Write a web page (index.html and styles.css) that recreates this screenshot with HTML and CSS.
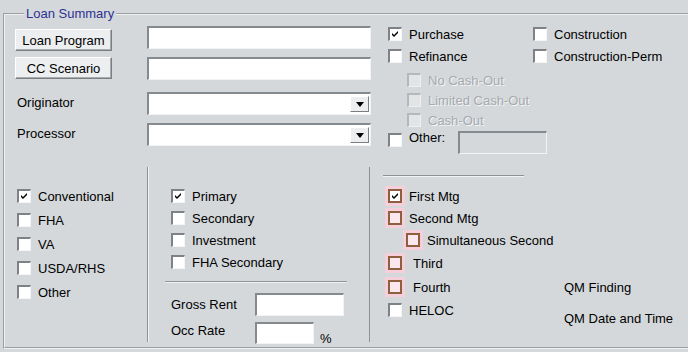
FILE: index.html
```html
<!DOCTYPE html>
<html lang="en">
<head>
  <meta charset="UTF-8">
  <title>Loan Summary</title>
  <link rel="stylesheet" href="styles.css">
</head>
<body>

<fieldset class="summary">
  <legend>Loan Summary</legend>

  <!-- Program, people and purpose -->
  <div class="top">
    <div class="fields">
      <div><button class="btn push">Loan Program</button></div>
      <input type="text" class="txt">
      <div><button class="btn">CC Scenario</button></div>
      <input type="text" class="txt">
      <label class="lbl">Originator</label>
      <div class="combo"><span class="drop"></span></div>
      <label class="lbl">Processor</label>
      <div class="combo"><span class="drop"></span></div>
    </div>

    <div class="purpose">
      <div class="pcol">
        <label class="chk"><span class="box"><svg class="tick" viewBox="0 0 7 7"><path d="M0 2L2 4L6 0V2L2 6L0 4Z"/></svg></span>Purchase</label>
        <label class="chk"><span class="box"></span>Refinance</label>
        <div class="cashout">
          <label class="chk off"><span class="box"></span>No Cash-Out</label>
          <label class="chk off"><span class="box"></span>Limited Cash-Out</label>
          <label class="chk off"><span class="box"></span>Cash-Out</label>
        </div>
        <div class="chk other"><span class="box"></span>Other:<input type="text" class="txt dim"></div>
      </div>
      <div class="pcol">
        <label class="chk"><span class="box"></span>Construction</label>
        <label class="chk"><span class="box"></span>Construction-Perm</label>
      </div>
    </div>
  </div>

  <!-- Loan type, occupancy, lien -->
  <div class="bottom">
    <div class="ltype">
      <label class="chk"><span class="box"><svg class="tick" viewBox="0 0 7 7"><path d="M0 2L2 4L6 0V2L2 6L0 4Z"/></svg></span>Conventional</label>
      <label class="chk"><span class="box"></span>FHA</label>
      <label class="chk"><span class="box"></span>VA</label>
      <label class="chk"><span class="box"></span>USDA/RHS</label>
      <label class="chk"><span class="box"></span>Other</label>
    </div>

    <div class="occ">
      <div class="olist">
        <label class="chk"><span class="box"><svg class="tick" viewBox="0 0 7 7"><path d="M0 2L2 4L6 0V2L2 6L0 4Z"/></svg></span>Primary</label>
        <label class="chk"><span class="box"></span>Secondary</label>
        <label class="chk"><span class="box"></span>Investment</label>
        <label class="chk"><span class="box"></span>FHA Secondary</label>
      </div>
      <hr class="rule wide">
      <div class="num">
        <span class="nlbl">Gross Rent</span>
        <input type="text" class="txt rent">
      </div>
      <div class="num">
        <span class="nlbl">Occ Rate</span>
        <input type="text" class="txt rate">
        <span class="pct">%</span>
      </div>
    </div>

    <div class="lien">
      <hr class="rule short">
      <div class="lrow">
        <div class="llist">
          <label class="chk req"><span class="box"><svg class="tick" viewBox="0 0 7 7"><path d="M0 2L2 4L6 0V2L2 6L0 4Z"/></svg></span>First Mtg</label>
          <label class="chk req"><span class="box"></span>Second Mtg</label>
          <label class="chk req sub"><span class="box"></span>Simultaneous Second</label>
          <label class="chk req tall"><span class="box"></span><span class="sp">Third</span></label>
          <label class="chk req tall"><span class="box"></span><span class="sp">Fourth</span></label>
          <label class="chk"><span class="box"></span>HELOC</label>
        </div>
        <div class="qm">
          <div>QM Finding</div>
          <div class="qm2">QM Date and Time</div>
        </div>
      </div>
    </div>
  </div>
</fieldset>

</body>
</html>
```

FILE: styles.css
```css
body {
  margin: 0;
  background: #d4d8db;
  font-family: "Liberation Sans", Arial, sans-serif;
  font-size: 13px;
  line-height: 15px;
  color: #000;
}
.summary {
  margin: 6px 0 0 3px;
  padding: 0 0 5px 10px;
  border: 2px groove #eef0f2;
  border-right: 0;
}
.summary legend {
  margin-left: 9px;
  padding: 0 2px;
  color: #2e3192;
  line-height: 15px;
}

/* shared controls */
.txt {
  box-sizing: border-box;
  height: 23px;
  margin: 0;
  padding: 0 3px;
  background: #fff;
  border-style: solid;
  border-width: 2px 1px 1px 2px;
  border-color: #858a8e #f2f3f4 #f2f3f4 #858a8e;
  font: inherit;
}
.txt.dim {
  background: #d4d8db;
}
.btn {
  box-sizing: border-box;
  width: 97px;
  height: 22px;
  padding: 0;
  background: #eceef0;
  border: 1px solid;
  border-color: #fff #7c7f82 #7c7f82 #fff;
  box-shadow: inset -1px -1px 0 #a9acaf;
  font: inherit;
  color: #000;
}
.combo {
  box-sizing: border-box;
  height: 23px;
  display: flex;
  align-items: center;
  justify-content: flex-end;
  padding-right: 1px;
  background: #fff;
  border-style: solid;
  border-width: 2px 1px 1px 2px;
  border-color: #858a8e #f2f3f4 #f2f3f4 #858a8e;
}
.drop {
  box-sizing: border-box;
  width: 19px;
  height: 16px;
  display: flex;
  align-items: center;
  justify-content: center;
  background: #eceef0;
  border: 1px solid;
  border-color: #fff #7c7f82 #7c7f82 #fff;
}
.drop::after {
  content: "";
  border-left: 4px solid transparent;
  border-right: 4px solid transparent;
  border-top: 5px solid #000;
}

.chk {
  display: flex;
  align-items: center;
  height: 22px;
  white-space: nowrap;
}
.box {
  box-sizing: border-box;
  width: 14px;
  height: 14px;
  flex: none;
  display: flex;
  align-items: center;
  justify-content: center;
  margin-right: 7px;
  background: #fff;
  border-style: solid;
  border-width: 2px 1px 1px 2px;
  border-color: #7e8286 #f4f5f6 #f4f5f6 #7e8286;
}
.tick {
  width: 7px;
  height: 7px;
  fill: #000;
}
.chk.off {
  height: 20px;
  color: #a6aaae;
  text-shadow: 1px 1px 0 #f4f5f6;
}
.chk.off .box {
  background: #e2e4e6;
  border-color: #b4b8bb #eef0f1 #eef0f1 #b4b8bb;
}
.chk.req .box {
  border: 2px solid #8d5f3e;
  background: #fbe7ee;
  box-shadow: 0 0 0 3px #f5d0db;
}
.chk.req .box:has(.tick) {
  background: #fff;
}

.rule {
  height: 0;
  margin: 0;
  border: 0;
  border-top: 1px solid #8e9296;
  border-bottom: 1px solid #f2f3f4;
}

/* top area */
.top {
  display: flex;
  height: 146px;
}
.fields {
  display: grid;
  grid-template-columns: 132px 224px;
  grid-template-rows: 31px 35px 31px 24px;
  align-items: start;
  padding-top: 5px;
}
.push {
  margin-top: 3px;
}
.lbl {
  padding-left: 2px;
  line-height: 21px;
}
.purpose {
  display: flex;
  margin-left: 17px;
  padding-top: 2px;
}
.pcol:first-child {
  width: 145px;
}
.cashout {
  margin-top: 3px;
  padding-left: 19px;
}
.chk.other {
  align-items: flex-start;
  height: 24px;
}
.chk.other .box {
  margin-top: 3px;
}
.chk.other .txt {
  width: 89px;
  height: 23px;
  margin: 1px 0 0 13px;
}

/* bottom area */
.bottom {
  display: flex;
  height: 175px;
}
.ltype {
  width: 132px;
  padding: 17px 0 0 2px;
  box-sizing: border-box;
}
.ltype .chk {
  height: 24px;
}
.occ {
  box-sizing: border-box;
  width: 223px;
  padding: 18px 0 0 23px;
  border-left: 1px solid #8e9296;
  border-right: 1px solid #8e9296;
  box-shadow: inset 1px 0 0 #f2f3f4;
}
.rule.wide {
  width: 182px;
  margin: 8px 0 0 -6px;
}
.num {
  display: flex;
  align-items: center;
  margin-top: 10px;
}
.num + .num {
  margin-top: 6px;
  align-items: flex-start;
}
.nlbl {
  width: 84px;
}
.num + .num .nlbl {
  margin-top: 1px;
}
.rent {
  width: 89px;
}
.rate {
  width: 59px;
  height: 22px;
}
.pct {
  align-self: flex-end;
  margin: 0 0 -2px 6px;
}
.lien {
  flex: 1;
}
.rule.short {
  width: 141px;
  margin: 8px 0 0 13px;
}
.lrow {
  display: flex;
  margin-top: 8px;
}
.llist {
  width: 176px;
  padding-left: 18px;
}
.chk.sub {
  padding-left: 18px;
}
.chk.tall {
  height: 24px;
}
.sp {
  margin-left: 4px;
}
.qm {
  padding-top: 95px;
}
.qm2 {
  margin-top: 16px;
}
```
